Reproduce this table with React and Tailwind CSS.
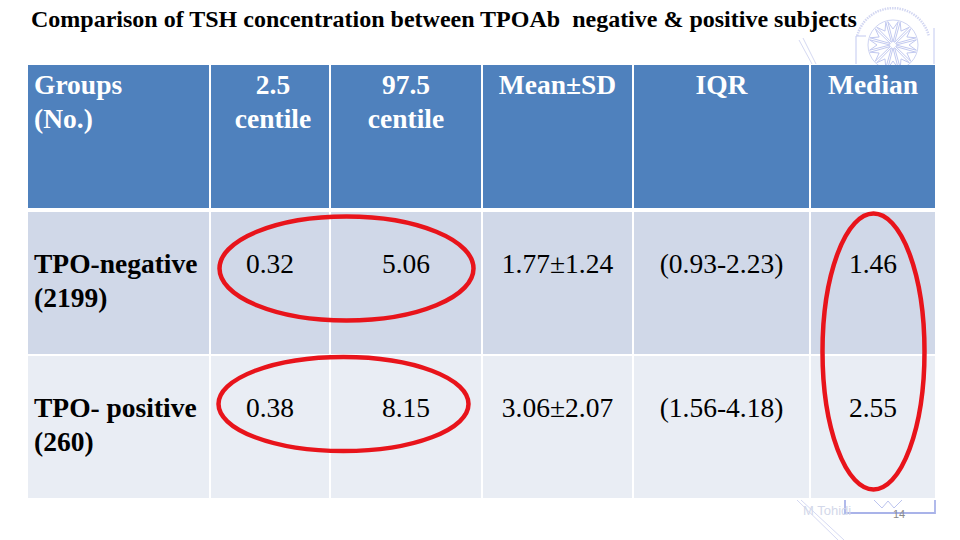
import React from 'react';

const COLS = 'grid grid-cols-[181px_118px_150px_149px_175px_124px] gap-x-[2px]';

const HEADERS = [
  { lines: ['Groups', '(No.)'], pad: 'pl-[6px] text-left' },
  { lines: ['2.5', 'centile'], pad: 'pl-[6px] text-center' },
  { lines: ['97.5', 'centile'], pad: 'text-center' },
  { lines: ['Mean±SD'], pad: 'text-center' },
  { lines: ['IQR'], pad: 'text-center' },
  { lines: ['Median'], pad: 'text-center' },
];

const ROWS = [
  { group: ['TPO-negative', '(2199)'], values: ['0.32', '5.06', '1.77±1.24', '(0.93-2.23)', '1.46'], bg: 'bg-[#d0d8e8]' },
  { group: ['TPO- positive', '(260)'], values: ['0.38', '8.15', '3.06±2.07', '(1.56-4.18)', '2.55'], bg: 'bg-[#e9edf4]' },
];

export default function App() {
  return (
    <div className="relative w-[960px] h-[540px] overflow-hidden bg-white text-black font-['Liberation_Serif',serif]">
      <Watermark />

      <div className="relative flex flex-col">
        <h1 className="pl-[31px] pt-[5px] text-[24px] leading-[28px] font-bold whitespace-pre">
          Comparison of TSH concentration between TPOAb  negative &amp; positive subjects
        </h1>

        <div className="ml-[28px] mt-[32px] flex flex-col text-[27.5px] leading-[34px]">
          <div className={`${COLS} h-[143px]`}>
            {HEADERS.map((h, i) => (
              <div key={i} className={`bg-[#4f81bd] text-white font-bold pt-[3px] ${h.pad}`}>
                {h.lines.map(l => <div key={l}>{l}</div>)}
              </div>
            ))}
          </div>

          {ROWS.map((r, i) => (
            <div key={i} className={`${COLS} h-[142px] ${i === 0 ? 'mt-[4px]' : 'mt-[2px]'}`}>
              <div className={`${r.bg} font-bold pl-[6px] pt-[35px]`}>
                {r.group.map(l => <div key={l}>{l}</div>)}
              </div>
              {r.values.map((v, j) => (
                <div key={j} className={`${r.bg} text-center pt-[35px]`}>{v}</div>
              ))}
            </div>
          ))}
        </div>
      </div>

      {/* red highlight rings drawn over the table */}
      <svg className="absolute inset-0 pointer-events-none" width="960" height="540" viewBox="0 0 960 540">
        <ellipse cx="346.5" cy="268.5" rx="127" ry="52" fill="none" stroke="#e8141b" strokeWidth="4.5" />
        <ellipse cx="343.5" cy="404" rx="125" ry="47" fill="none" stroke="#e8141b" strokeWidth="4.5" />
        <ellipse cx="873.5" cy="351.5" rx="51" ry="138" fill="none" stroke="#e8141b" strokeWidth="4.5" />
      </svg>

      <span className="absolute left-[893px] top-[508px] text-[11px] leading-[12px] text-[#8a8a8a] font-['Liberation_Sans',sans-serif]">
        14
      </span>
    </div>
  );
}

function Watermark() {
  const cx = 893;
  const cy = 45;
  const petals = Array.from({ length: 12 }, (_, i) => (i * Math.PI) / 6);
  const pt = (a, r) => `${(cx + Math.cos(a) * r).toFixed(1)} ${(cy + Math.sin(a) * r).toFixed(1)}`;
  return (
    <>
      <svg className="absolute inset-0 pointer-events-none" width="960" height="540" viewBox="0 0 960 540">
        <g fill="none" stroke="#c2c9f0" strokeWidth="1">
          {/* top right emblem */}
          <path d={`M${pt(Math.PI * 1.08, 37)} A37 37 0 0 1 ${pt(Math.PI * 1.92, 37)}`} strokeDasharray="1.5 1" strokeWidth="2.5" stroke="#d3d7f2" />
          {petals.map((a, i) => (
            <path key={i} d={`M${pt(a, 3)} L${pt(a + 0.22, 24)} L${pt(a, 16)} L${pt(a - 0.22, 24)} Z`} />
          ))}
          <circle cx={cx} cy={cy} r="25" stroke="#ced4f2" />
          <path d="M856 36 L856 64 M934 28 L934 64 M856 36 L866 36" />
          <path d="M799 40 L812 64 M803 38 L816 64" stroke="#d5d9f2" />

          {/* bottom right bracket */}
          <path d="M845 500 L845 513 L935 513 L935 500" strokeWidth="1.8" stroke="#a9b3e9" />
          <path d="M874 500 L882 508 L888 501 L894 508 L902 500" stroke="#bcc4ef" />
          <path d="M797 500 L838 540 M801 500 L844 540" stroke="#d5d9f2" />
        </g>
      </svg>
      <div className="absolute left-[803px] top-[503px] whitespace-nowrap text-[13px] leading-[16px] text-[#d3d8ea] font-['Liberation_Sans',sans-serif]">
        M Tohidi
      </div>
    </>
  );
}
